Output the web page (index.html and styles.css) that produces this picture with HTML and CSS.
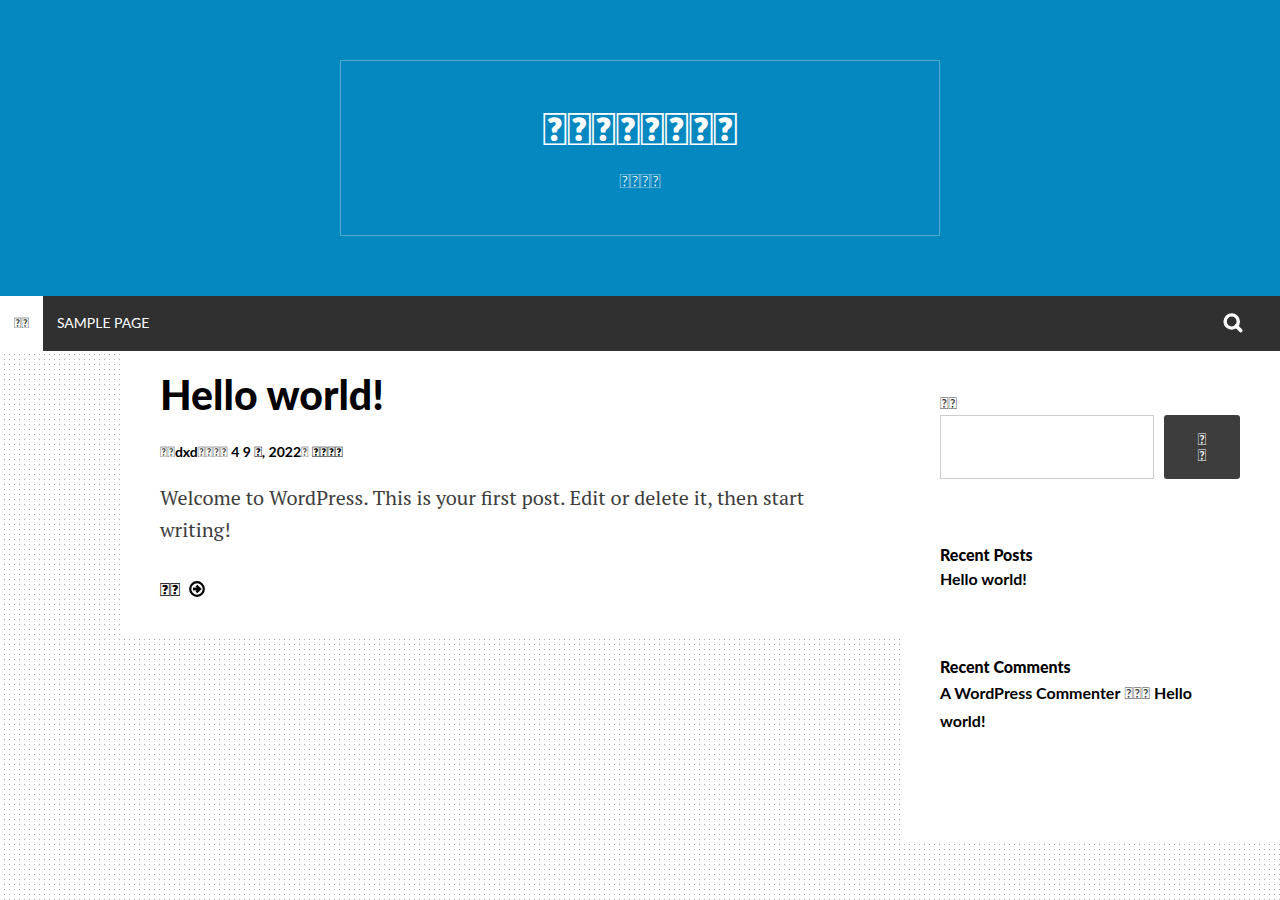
FILE: index.html
```html
<!DOCTYPE html>
<html lang="en">
<head>
<meta charset="utf-8">
<title>Hello world!</title>
<link rel="stylesheet" href="styles.css">
</head>
<body>
<header class="site-header">
  <div class="branding">
    <h1 class="site-title"><a href="#">&#xE101;&#xE102;&#xE103;&#xE104;&#xE105;&#xE106;&#xE107;&#xE108;</a></h1>
    <p class="tagline">&#xE101;&#xE102;&#xE103;&#xE104;</p>
  </div>
</header>
<nav class="main-nav">
  <a class="nav-link current" href="#">&#xE101;&#xE102;</a>
  <a class="nav-link" href="#">Sample Page</a>
  <button class="search-toggle" type="button" aria-label="Search">
    <svg width="20" height="20" viewBox="0 0 20 20" fill="none" stroke="currentColor"><circle cx="8.7" cy="8.5" r="6.6" stroke-width="3.4"/><path d="M13.2 13l4.5 4.5" stroke-width="3.6" stroke-linecap="round"/></svg>
  </button>
</nav>
<div class="content">
  <main class="posts">
    <article class="post">
      <h2 class="post-title"><a href="#">Hello world!</a></h2>
      <p class="post-meta">&#xE101;&#xE102;<a href="#">dxd</a>&#xE101;&#xE102;&#xE103;&#xE104; <a href="#">4 9 &#xE101;, 2022</a>&#xE101; <a href="#">&#xE101;&#xE102;&#xE103;&#xE104;</a></p>
      <p class="post-text">Welcome to WordPress. This is your first post. Edit or delete it, then start writing!</p>
      <a class="read-more" href="#">&#xE101;&#xE102;
        <svg width="16" height="16" viewBox="0 0 16 16" fill="none" stroke="currentColor"><circle cx="8" cy="8" r="6.8" stroke-width="2.2"/><path d="M4 8h5" stroke-width="2.8"/><path d="M7.4 4.6L10.8 8l-3.4 3.4" stroke-width="2.6"/></svg>
      </a>
    </article>
  </main>
  <aside class="sidebar">
    <form class="search-form">
      <label class="search-label" for="search">&#xE101;&#xE102;</label>
      <div class="search-row">
        <input class="search-input" id="search" type="search">
        <button class="search-button" type="submit">&#xE101;<br>&#xE102;</button>
      </div>
    </form>
    <section class="widget">
      <h2 class="widget-title">Recent Posts</h2>
      <ul class="widget-list"><li><a href="#">Hello world!</a></li></ul>
    </section>
    <section class="widget">
      <h2 class="widget-title">Recent Comments</h2>
      <p class="comment"><a href="#">A WordPress Commenter</a> &#xE101;&#xE102;&#xE103; <a href="#">Hello world!</a></p>
    </section>
  </aside>
</div>
</body>
</html>
```
FILE: styles.css
```css
* { box-sizing: border-box; }
body {
  margin: 0;
  min-height: 100vh;
  font-family: Lato, sans-serif;
  font-size: 16px;
  color: #3d3d3d;
  background: #fff conic-gradient(from 90deg at 4px 4px, #aaa 0 90deg, transparent 0) 0 0 / 5px 5px;
}
h1, h2, p, ul { margin: 0; padding: 0; }
a { color: inherit; text-decoration: none; }
.site-header {
  padding: 60px 20px;
  background: #0587bf;
  color: #fff;
  text-align: center;
}
.branding {
  max-width: 600px;
  margin: 0 auto;
  padding: 39px 40px 43px;
  border: 1px solid rgba(255, 255, 255, .3);
}
.site-title { font-size: 44px; font-weight: 900; line-height: 56px; }
.tagline { margin-top: 12px; font-size: 20px; font-weight: 300; line-height: 24px; }
.main-nav { display: flex; height: 55px; background: #303030; color: #fff; }
.nav-link {
  display: flex;
  align-items: center;
  padding: 0 14px 2px;
  font-size: 14px;
  text-transform: uppercase;
}
.current { background: #fff; color: #303030; }
.search-toggle {
  display: flex;
  align-items: center;
  margin-left: auto;
  padding: 0 37px 2px;
  border: 0;
  background: none;
  color: inherit;
}
.content { display: grid; grid-template-columns: minmax(0, 1fr) 380px; align-items: start; }
.posts { padding-left: 120px; }
.post { padding: 20px 40px 36px; background: #fff; }
.post-title { font-size: 41px; font-weight: 900; line-height: 48px; color: #000; }
.post-meta { margin-top: 22px; font-size: 14px; line-height: 22px; }
.post-meta a { font-weight: 700; color: #000; }
.post-text {
  margin-top: 19px;
  font-family: "PT Serif", "Liberation Serif", serif;
  font-size: 20px;
  line-height: 32px;
}
.read-more {
  display: flex;
  align-items: center;
  gap: 9px;
  margin-top: 31px;
  font-size: 18px;
  font-weight: 900;
  line-height: 24px;
  color: #000;
}
.sidebar {
  display: flex;
  flex-direction: column;
  gap: 64px;
  padding: 40px 40px 108px;
  background: #fff;
}
.search-label { display: block; line-height: 24px; }
.search-row { display: flex; gap: 10px; }
.search-input {
  flex: 1;
  min-width: 0;
  height: 64px;
  padding: 0 10px;
  border: 1px solid #ccc;
  background: #fff;
  font: inherit;
}
.search-button {
  width: 76px;
  border: 0;
  border-radius: 3px;
  background: #3d3d3d;
  color: #fff;
  font: 16px/16px Lato, sans-serif;
}
.widget a { font-weight: 700; color: #000; }
.widget-title { font-size: 16px; font-weight: 900; line-height: 24px; color: #000; }
.widget-list { list-style: none; line-height: 24px; }
.comment { line-height: 28px; }
```
